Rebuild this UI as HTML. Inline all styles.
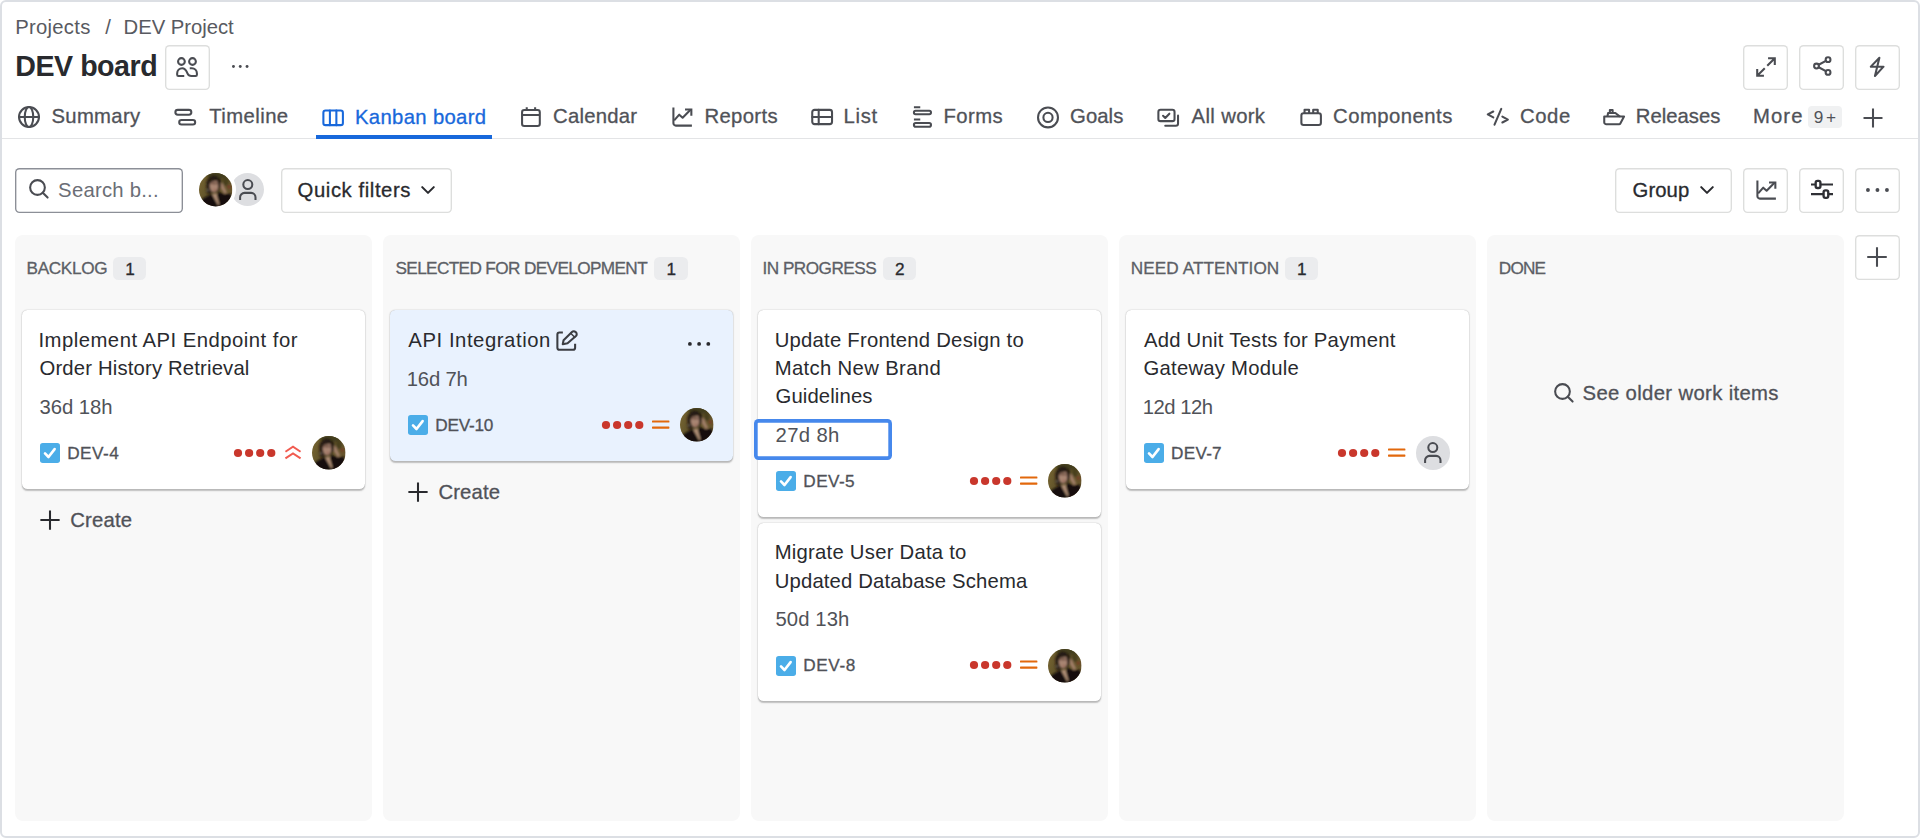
<!DOCTYPE html>
<html lang="en"><head><meta charset="utf-8"><title>DEV board</title>
<style>
html,body{margin:0;padding:0;background:#fff;}
body{width:1920px;height:838px;overflow:hidden;font-family:"Liberation Sans",Arial,sans-serif;}
#app{position:absolute;left:0;top:0;width:1920px;height:838px;background:#fff;overflow:hidden;}
#frame{position:absolute;left:0;top:0;width:1920px;height:838px;box-sizing:border-box;border:2px solid #dcdfe4;border-radius:6px;}
#app>*{position:absolute;}
.t{position:absolute;white-space:pre;margin:0;}
.ic{position:absolute;overflow:visible;}
.btn{position:absolute;border-radius:4.5px;background:#fff;box-shadow:inset 0 0 0 1.375px rgba(11,18,14,.14);}
.col{position:absolute;background:#f8f8f8;border-radius:8px;}
.card{position:absolute;background:#fff;border-radius:5.5px;box-shadow:0 1.375px 1.375px rgba(30,31,33,.25),0 0 1.375px rgba(30,31,33,.31);}
.badge{position:absolute;background:#ebecee;border-radius:4px;}
.dot{position:absolute;width:8.3px;height:8.3px;border-radius:50%;background:#c9372c;}
.av{position:absolute;border-radius:50%;overflow:hidden;}

</style></head>
<body>
<div id="app">
<span class="t" style="left:15.23px;top:16px;font-size:20.3px;line-height:22px;color:#585a61;letter-spacing:0.257px;">Projects</span>
<span class="t" style="left:105.20px;top:16px;font-size:20.3px;line-height:22px;color:#585a61;">/</span>
<span class="t" style="left:123.56px;top:16px;font-size:20.3px;line-height:22px;color:#585a61;letter-spacing:-0.029px;">DEV Project</span>
<span class="t" style="left:15.29px;top:50px;font-size:28.6px;line-height:32px;color:#292a2e;font-weight:700;letter-spacing:-0.473px;">DEV board</span>
<div class="btn" style="left:164.8px;top:44.7px;width:45px;height:45.3px;"></div>
<svg class="ic" style="left:176.10px;top:55.90px;" width="22" height="22" viewBox="0 0 16 16" fill="none" stroke="#4a4c52" stroke-width="1.5" stroke-linecap="round" stroke-linejoin="round"><circle cx="3.95" cy="4" r="2.45"/><circle cx="12" cy="4" r="2.45"/><path d="M6 14.5H1.75a.9.9 0 0 1-.9-.9V12.5A3.65 3.65 0 0 1 4.5 8.85c2.6 0 3.1 2.2 3.8 3.75.6 1.3 1.5 1.9 2.9 1.9h3.1a.9.9 0 0 0 .9-.9V12.5a3.65 3.65 0 0 0-3.65-3.65H10" stroke-linecap="butt"/></svg>
<svg class="ic" style="left:230.85px;top:63.95px" width="18.50" height="4.90" fill="#4a4c52"><circle cx="2.45" cy="2.45" r="1.45"/><circle cx="9.25" cy="2.45" r="1.45"/><circle cx="16.05" cy="2.45" r="1.45"/></svg>
<div class="btn" style="left:1743.3px;top:44.9px;width:44.4px;height:45.3px;"></div>
<div class="btn" style="left:1799.3px;top:44.9px;width:44.4px;height:45.3px;"></div>
<div class="btn" style="left:1855.3px;top:44.9px;width:44.4px;height:45.3px;"></div>
<svg class="ic" style="left:1755.00px;top:55.60px;" width="22" height="22" viewBox="0 0 16 16" fill="none" stroke="#4a4c52" stroke-width="1.5" stroke-linecap="round" stroke-linejoin="round"><path d="M9.5 1.6h4.9v4.9M14.4 1.6 8.9 7.1M6.5 14.4H1.6V9.5M1.6 14.4 7.1 8.9" stroke-linecap="butt" stroke-linejoin="miter"/></svg>
<svg class="ic" style="left:1810.90px;top:55.00px;" width="22" height="22" viewBox="0 0 16 16" fill="none" stroke="#4a4c52" stroke-width="1.5" stroke-linecap="round" stroke-linejoin="round"><circle cx="12.4" cy="3.4" r="1.75"/><circle cx="4" cy="8" r="1.75"/><circle cx="12.4" cy="12.65" r="1.75"/><path d="M5.6 7.1l5.2-2.85M5.6 8.9l5.2 2.85"/></svg>
<svg class="ic" style="left:1866.40px;top:55.90px;" width="22" height="22" viewBox="0 0 16 16" fill="none" stroke="#4a4c52" stroke-width="1.5" stroke-linecap="round" stroke-linejoin="round"><path d="M9.75 1.25 3.5 7.75h9.25L6.5 14.5z"/></svg>
<svg class="ic" style="left:17.90px;top:106.40px;" width="22" height="22" viewBox="0 0 16 16" fill="none" stroke="#4a4c52" stroke-width="1.5" stroke-linecap="round" stroke-linejoin="round"><circle cx="8" cy="8" r="7.25"/><ellipse cx="8" cy="8" rx="3.1" ry="7.25"/><path d="M.75 8h14.5"/></svg>
<span class="t" style="left:51.50px;top:105px;font-size:20.3px;line-height:22px;color:#505258;-webkit-text-stroke:0.3px #505258;letter-spacing:0.307px;">Summary</span>
<svg class="ic" style="left:174.30px;top:107.20px;" width="22" height="22" viewBox="0 0 16 16" fill="none" stroke="#4a4c52" stroke-width="1.5" stroke-linecap="round" stroke-linejoin="round"><rect x="1" y="2.1" width="11.6" height="3.5" rx="1.75"/><rect x="3.8" y="9.45" width="11.6" height="3.3" rx="1.65"/></svg>
<span class="t" style="left:209.14px;top:105px;font-size:20.3px;line-height:22px;color:#505258;-webkit-text-stroke:0.3px #505258;letter-spacing:0.449px;">Timeline</span>
<svg class="ic" style="left:321.90px;top:106.70px;" width="22" height="22" viewBox="0 0 16 16" fill="none" stroke="#1868db" stroke-width="1.5" stroke-linecap="round" stroke-linejoin="round"><rect x="1" y="2.5" width="14.2" height="10.7" rx="1.6"/><path d="M5.75 2.5v10.7M10.45 2.5v10.7"/></svg>
<span class="t" style="left:355.01px;top:106px;font-size:20.3px;line-height:22px;color:#1868db;-webkit-text-stroke:0.3px #1868db;letter-spacing:0.333px;">Kanban board</span>
<svg class="ic" style="left:520.20px;top:106.40px;" width="22" height="22" viewBox="0 0 16 16" fill="none" stroke="#4a4c52" stroke-width="1.5" stroke-linecap="round" stroke-linejoin="round"><rect x="1.5" y="2.9" width="12.9" height="11.6" rx="1.6"/><path d="M1.5 6.6h12.9M4.9 .9v2.6M11 .9v2.6" stroke-linecap="butt"/></svg>
<span class="t" style="left:553.04px;top:105px;font-size:20.3px;line-height:22px;color:#505258;-webkit-text-stroke:0.3px #505258;letter-spacing:0.246px;">Calendar</span>
<svg class="ic" style="left:671.40px;top:106.40px;" width="22" height="22" viewBox="0 0 16 16" fill="none" stroke="#4a4c52" stroke-width="1.5" stroke-linecap="round" stroke-linejoin="round"><path d="M1.75 1v11.5a1.75 1.75 0 0 0 1.75 1.75H15.2" stroke-linecap="butt"/><path d="M2.3 10.5 6 6.3l2.45 2.2 5.9-5.9" stroke-linecap="butt"/><path d="M10.2 2.5h4.6v4.5" stroke-linecap="butt" stroke-linejoin="miter"/></svg>
<span class="t" style="left:704.47px;top:105px;font-size:20.3px;line-height:22px;color:#505258;-webkit-text-stroke:0.3px #505258;letter-spacing:0.344px;">Reports</span>
<svg class="ic" style="left:810.60px;top:106.40px;" width="22" height="22" viewBox="0 0 16 16" fill="none" stroke="#4a4c52" stroke-width="1.5" stroke-linecap="round" stroke-linejoin="round"><rect x=".9" y="2.8" width="14.4" height="10.4" rx="1.7"/><path d="M.9 8h14.4M5.6 2.8v10.4"/></svg>
<span class="t" style="left:843.58px;top:105px;font-size:20.3px;line-height:22px;color:#505258;-webkit-text-stroke:0.3px #505258;letter-spacing:0.649px;">List</span>
<svg class="ic" style="left:912.00px;top:106.40px;" width="22" height="22" viewBox="0 0 16 16" fill="none" stroke="#4a4c52" stroke-width="1.5" stroke-linecap="round" stroke-linejoin="round"><path d="M1.4 .85h4.6M1.4 9.8h4.6" stroke-linecap="butt"/><rect x="1.4" y="3.45" width="12.4" height="2.55" rx="1.2"/><rect x="1.4" y="12.3" width="12.4" height="2.85" rx="1.3"/></svg>
<span class="t" style="left:943.58px;top:105px;font-size:20.3px;line-height:22px;color:#505258;-webkit-text-stroke:0.3px #505258;letter-spacing:0.394px;">Forms</span>
<svg class="ic" style="left:1036.50px;top:106.40px;" width="22" height="22" viewBox="0 0 16 16" fill="none" stroke="#4a4c52" stroke-width="1.5" stroke-linecap="round" stroke-linejoin="round"><circle cx="8" cy="8.3" r="7.25"/><circle cx="8" cy="8.3" r="3.35"/></svg>
<span class="t" style="left:1070.05px;top:105px;font-size:20.3px;line-height:22px;color:#505258;-webkit-text-stroke:0.3px #505258;letter-spacing:0.067px;">Goals</span>
<svg class="ic" style="left:1157.00px;top:106.40px;" width="22" height="22" viewBox="0 0 16 16" fill="none" stroke="#4a4c52" stroke-width="1.5" stroke-linecap="round" stroke-linejoin="round"><rect x="1" y="2.75" width="11.75" height="8.25" rx="1.6"/><path d="M4.4 7.1 6 8.7 9 5.6"/><path d="M15.3 7v5.75a1.6 1.6 0 0 1-1.6 1.6H6"/></svg>
<span class="t" style="left:1191.55px;top:105px;font-size:20.3px;line-height:22px;color:#505258;-webkit-text-stroke:0.3px #505258;letter-spacing:0.353px;">All work</span>
<svg class="ic" style="left:1299.80px;top:106.40px;" width="22" height="22" viewBox="0 0 16 16" fill="none" stroke="#4a4c52" stroke-width="1.5" stroke-linecap="round" stroke-linejoin="round"><rect x="1" y="5.25" width="14.2" height="8.5" rx="1.6"/><path d="M3.3 5.25v-2.5h3.3v2.5M9.6 5.25v-2.5h3.3v2.5" stroke-linecap="butt"/></svg>
<span class="t" style="left:1333.04px;top:105px;font-size:20.3px;line-height:22px;color:#505258;-webkit-text-stroke:0.3px #505258;letter-spacing:0.473px;">Components</span>
<svg class="ic" style="left:1486.00px;top:106.40px;" width="22" height="22" viewBox="0 0 16 16" fill="none" stroke="#4a4c52" stroke-width="1.5" stroke-linecap="round" stroke-linejoin="round"><path d="M5.3 4 1.3 6.15 5.3 8.3M11.9 7.7l4 2.15-4 2.15M11.1 2.1 6.2 13.6"/></svg>
<span class="t" style="left:1519.88px;top:105px;font-size:20.3px;line-height:22px;color:#505258;-webkit-text-stroke:0.3px #505258;letter-spacing:0.630px;">Code</span>
<svg class="ic" style="left:1603.25px;top:106.40px;" width="22" height="22" viewBox="0 0 16 16" fill="none" stroke="#4a4c52" stroke-width="1.5" stroke-linecap="round" stroke-linejoin="round"><path d="M.9 7.7h14.4l-2.7 5a1 1 0 0 1-.9.55H2.4a1.5 1.5 0 0 1-1.5-1.5z"/><path d="M3.2 7.7l.5-2.6H9l3.3 2.6M5 5.1V2.9h2V5.1" stroke-linecap="butt"/></svg>
<span class="t" style="left:1635.86px;top:105px;font-size:20.3px;line-height:22px;color:#505258;-webkit-text-stroke:0.3px #505258;letter-spacing:-0.018px;">Releases</span>
<span class="t" style="left:1752.93px;top:105px;font-size:20.3px;line-height:22px;color:#505258;-webkit-text-stroke:0.3px #505258;letter-spacing:1.133px;">More</span>
<div class="badge" style="left:1808.1px;top:105.9px;width:33.7px;height:22.1px;background:#f0f1f2"></div>
<span class="t" style="left:1813.82px;top:107px;font-size:17.2px;line-height:20px;color:#505258;letter-spacing:2.596px;">9+</span>
<svg class="ic" style="left:1861.70px;top:106.50px;" width="22" height="22" viewBox="0 0 16 16" fill="none" stroke="#4a4c52" stroke-width="1.5" stroke-linecap="round" stroke-linejoin="round"><path d="M8 1.1v13.8M1.1 8h13.8" stroke-linecap="butt"/></svg>
<div style="left:2px;top:138px;width:1916px;height:1.4px;background:#e3e4e6"></div>
<div style="left:315.9px;top:135.1px;width:176.2px;height:4.1px;background:#1868db"></div>
<div class="btn" style="left:15.3px;top:168px;width:167.5px;height:44.5px;box-shadow:inset 0 0 0 1.375px #8c8f97"></div>
<svg class="ic" style="left:27.90px;top:177.50px;" width="22" height="22" viewBox="0 0 16 16" fill="none" stroke="#4a4c52" stroke-width="1.5" stroke-linecap="round" stroke-linejoin="round"><circle cx="6.9" cy="6.9" r="5.35"/><path d="M10.75 10.75l3.5 3.5"/></svg>
<span class="t" style="left:58.11px;top:179px;font-size:20.3px;line-height:22px;color:#6b6e76;letter-spacing:0.242px;">Search b...</span>
<div class="av" style="left:230.80px;top:172.60px;width:33.6px;height:33.6px;background:#dddee1"></div>
<svg class="ic" style="left:230.80px;top:172.60px" width="33.6" height="33.6" viewBox="0 0 33.6 33.6" fill="none" stroke="#4a4c52" stroke-width="2.05"><circle cx="16.8" cy="11.6" r="4.5"/><path d="M9.1 26.9v-2.6a4.4 4.4 0 0 1 4.4-4.4h6.6a4.4 4.4 0 0 1 4.4 4.4v2.6"/></svg>
<div class="av" style="left:196.6px;top:169.9px;width:39px;height:39px;background:#fff"></div>
<svg class="ic" style="left:199.40px;top:172.70px" width="33.4" height="33.4" viewBox="0 0 100 100"><defs><clipPath id="c1994"><circle cx="50" cy="50" r="50"/></clipPath><filter id="b1994" x="-10%" y="-10%" width="120%" height="120%"><feGaussianBlur stdDeviation="2.7"/></filter><linearGradient id="g1994" x1="0" y1="0" x2="1" y2="0.3"><stop offset="0" stop-color="#7b6832"/><stop offset="0.45" stop-color="#5b4f29"/><stop offset="1" stop-color="#67552c"/></linearGradient></defs><g clip-path="url(#c1994)"><rect width="100" height="100" fill="url(#g1994)"/><g filter="url(#b1994)"><ellipse cx="55" cy="7" rx="32" ry="10" fill="#423c1d"/><ellipse cx="80" cy="24" rx="9" ry="15" fill="#4a401f"/><ellipse cx="90" cy="42" rx="5" ry="5" fill="#7a3a25"/><ellipse cx="44" cy="33" rx="22" ry="26" fill="#261b12"/><path d="M23 40 Q20 62 30 64 L40 56Z" fill="#2a1e13"/><ellipse cx="45" cy="38" rx="13" ry="19" fill="#a98572"/><path d="M30 24 Q45 9 61 25 Q53 20 46 25 Q38 22 31 33Z" fill="#261b12"/><ellipse cx="45" cy="31" rx="11" ry="2.8" fill="#5a4034" opacity=".85"/><ellipse cx="47" cy="50" rx="3.5" ry="1.5" fill="#8a4238"/><ellipse cx="61" cy="30" rx="4.5" ry="15" fill="#261b12"/><path d="M65 31 Q70 27 73 36 L84 58 L77 63 L65 46Z" fill="#a07e68"/><path d="M-5 105 L10 78 L38 62 L50 72 L58 56 L76 63 L95 62 L108 105Z" fill="#14110b"/><path d="M39 64 L52 61 L61 94 L57 96Z" fill="#b08f76"/><circle cx="27" cy="51" r="2" fill="#c8c4bc"/></g></g></svg>
<div class="btn" style="left:280.6px;top:168px;width:171.3px;height:44.5px;"></div>
<span class="t" style="left:297.61px;top:179px;font-size:20.3px;line-height:22px;color:#292a2e;-webkit-text-stroke:0.3px #292a2e;letter-spacing:0.575px;">Quick filters</span>
<svg class="ic" style="left:416.50px;top:179.20px;" width="22" height="22" viewBox="0 0 16 16" fill="none" stroke="#292a2e" stroke-width="1.5" stroke-linecap="round" stroke-linejoin="round"><path d="M3.8 5.9 8 10.1l4.2-4.2"/></svg>
<div class="btn" style="left:1615.2px;top:168px;width:116.8px;height:44.5px;"></div>
<span class="t" style="left:1632.58px;top:179px;font-size:20.3px;line-height:22px;color:#292a2e;-webkit-text-stroke:0.3px #292a2e;letter-spacing:0.079px;">Group</span>
<svg class="ic" style="left:1696.00px;top:179.20px;" width="22" height="22" viewBox="0 0 16 16" fill="none" stroke="#292a2e" stroke-width="1.5" stroke-linecap="round" stroke-linejoin="round"><path d="M3.8 5.9 8 10.1l4.2-4.2"/></svg>
<div class="btn" style="left:1743.2px;top:168px;width:44.4px;height:44.6px;"></div>
<div class="btn" style="left:1799.3px;top:168px;width:44.4px;height:44.6px;"></div>
<div class="btn" style="left:1855.3px;top:168px;width:44.4px;height:44.6px;"></div>
<svg class="ic" style="left:1754.50px;top:179.30px;" width="22" height="22" viewBox="0 0 16 16" fill="none" stroke="#4a4c52" stroke-width="1.5" stroke-linecap="round" stroke-linejoin="round"><path d="M1.75 1v11.5a1.75 1.75 0 0 0 1.75 1.75H15.2" stroke-linecap="butt"/><path d="M2.3 10.5 6 6.3l2.45 2.2 5.9-5.9" stroke-linecap="butt"/><path d="M10.2 2.5h4.6v4.5" stroke-linecap="butt" stroke-linejoin="miter"/></svg>
<svg class="ic" style="left:1810.90px;top:179.30px;" width="22" height="22" viewBox="0 0 16 16" fill="none" stroke="#2f3035" stroke-width="1.5" stroke-linecap="round" stroke-linejoin="round"><path d="M0 3.95h3.5M6.75 3.95H16M0 11h9.25M12.45 11H16" stroke-linecap="butt"/><rect x="3.4" y="1.4" width="3.45" height="5.15" rx="1.3" stroke-width="1.7"/><rect x="9.15" y="8.3" width="3.4" height="5.45" rx="1.3" stroke-width="1.7"/></svg>
<svg class="ic" style="left:1864.85px;top:186.95px" width="24.90" height="5.90" fill="#4a4c52"><circle cx="2.95" cy="2.95" r="1.95"/><circle cx="12.45" cy="2.95" r="1.95"/><circle cx="21.95" cy="2.95" r="1.95"/></svg>
<div class="btn" style="left:1855.3px;top:235.2px;width:44.4px;height:44.4px;"></div>
<svg class="ic" style="left:1866.30px;top:246.40px;" width="22" height="22" viewBox="0 0 16 16" fill="none" stroke="#4a4c52" stroke-width="1.5" stroke-linecap="round" stroke-linejoin="round"><path d="M8 .9v14.2M.9 8h14.2" stroke-linecap="butt"/></svg>
<div class="col" style="left:15.2px;top:235px;width:356.6px;height:585.5px"></div>
<span class="t" style="left:26.54px;top:258px;font-size:17.2px;line-height:20px;color:#5c5f66;-webkit-text-stroke:0.3px #5c5f66;letter-spacing:-0.339px;">BACKLOG</span>
<div class="badge" style="left:113.0px;top:256.5px;width:33.3px;height:23.5px;border-radius:5.5px"></div>
<span class="t" style="left:125.18px;top:259px;font-size:17.2px;line-height:20px;color:#292a2e;-webkit-text-stroke:0.3px #292a2e;">1</span>
<div class="col" style="left:383.2px;top:235px;width:356.6px;height:585.5px"></div>
<span class="t" style="left:395.45px;top:258px;font-size:17.2px;line-height:20px;color:#5c5f66;-webkit-text-stroke:0.3px #5c5f66;letter-spacing:-0.620px;">SELECTED FOR DEVELOPMENT</span>
<div class="badge" style="left:654.3px;top:256.5px;width:33.3px;height:23.5px;border-radius:5.5px"></div>
<span class="t" style="left:666.55px;top:259px;font-size:17.2px;line-height:20px;color:#292a2e;-webkit-text-stroke:0.3px #292a2e;">1</span>
<div class="col" style="left:751.3px;top:235px;width:356.6px;height:585.5px"></div>
<span class="t" style="left:762.58px;top:258px;font-size:17.2px;line-height:20px;color:#5c5f66;-webkit-text-stroke:0.3px #5c5f66;letter-spacing:-0.533px;">IN PROGRESS</span>
<div class="badge" style="left:882.5px;top:256.5px;width:33.3px;height:23.5px;border-radius:5.5px"></div>
<span class="t" style="left:894.98px;top:259px;font-size:17.2px;line-height:20px;color:#292a2e;-webkit-text-stroke:0.3px #292a2e;">2</span>
<div class="col" style="left:1119.4px;top:235px;width:356.6px;height:585.5px"></div>
<span class="t" style="left:1130.77px;top:258px;font-size:17.2px;line-height:20px;color:#5c5f66;-webkit-text-stroke:0.3px #5c5f66;letter-spacing:0.060px;">NEED ATTENTION</span>
<div class="badge" style="left:1284.8px;top:256.5px;width:33.3px;height:23.5px;border-radius:5.5px"></div>
<span class="t" style="left:1297.04px;top:259px;font-size:17.2px;line-height:20px;color:#292a2e;-webkit-text-stroke:0.3px #292a2e;">1</span>
<div class="col" style="left:1487.4px;top:235px;width:356.6px;height:585.5px"></div>
<span class="t" style="left:1498.87px;top:258px;font-size:17.2px;line-height:20px;color:#5c5f66;-webkit-text-stroke:0.3px #5c5f66;letter-spacing:-0.813px;">DONE</span>
<div class="card" style="left:22.2px;top:309.7px;width:343.1px;height:179px;background:#fff"></div>
<span class="t" style="left:38.50px;top:329px;font-size:20.3px;line-height:22px;color:#292a2e;letter-spacing:0.480px;">Implement API Endpoint for</span>
<span class="t" style="left:39.45px;top:357px;font-size:20.3px;line-height:22px;color:#292a2e;letter-spacing:0.168px;">Order History Retrieval</span>
<span class="t" style="left:39.44px;top:396px;font-size:20.3px;line-height:22px;color:#505258;letter-spacing:-0.024px;">36d 18h</span>
<svg class="ic" style="left:39.60px;top:443.00px" width="20" height="20" viewBox="0 0 16 16"><rect x="0" y="0" width="16" height="16" rx="2.2" fill="#4bade8"/><path d="M4 8.3 6.8 11.2 11.7 4.9" fill="none" stroke="#fff" stroke-width="2.1" stroke-linecap="round" stroke-linejoin="round"/></svg>
<span class="t" style="left:67.16px;top:443px;font-size:17.2px;line-height:20px;color:#505258;-webkit-text-stroke:0.3px #505258;letter-spacing:0.499px;">DEV-4</span>
<svg class="ic" style="left:231.80px;top:446.60px" width="46" height="12" fill="#c9372c"><circle cx="6.00" cy="6" r="4.1"/><circle cx="17.10" cy="6" r="4.1"/><circle cx="28.20" cy="6" r="4.1"/><circle cx="39.30" cy="6" r="4.1"/></svg>
<svg class="ic" style="left:281.70px;top:441.60px;" width="22" height="22" viewBox="0 0 16 16" fill="none" stroke="#f15b50" stroke-width="1.4" stroke-linecap="round" stroke-linejoin="round"><path d="M2.5 7.1 8 3.45l5.5 3.65M2.5 11.9 8 8.25l5.5 3.65" stroke-linecap="butt" stroke-linejoin="miter"/></svg>
<svg class="ic" style="left:312.00px;top:436.30px" width="33.6" height="33.6" viewBox="0 0 100 100"><defs><clipPath id="c3120"><circle cx="50" cy="50" r="50"/></clipPath><filter id="b3120" x="-10%" y="-10%" width="120%" height="120%"><feGaussianBlur stdDeviation="2.7"/></filter><linearGradient id="g3120" x1="0" y1="0" x2="1" y2="0.3"><stop offset="0" stop-color="#7b6832"/><stop offset="0.45" stop-color="#5b4f29"/><stop offset="1" stop-color="#67552c"/></linearGradient></defs><g clip-path="url(#c3120)"><rect width="100" height="100" fill="url(#g3120)"/><g filter="url(#b3120)"><ellipse cx="55" cy="7" rx="32" ry="10" fill="#423c1d"/><ellipse cx="80" cy="24" rx="9" ry="15" fill="#4a401f"/><ellipse cx="90" cy="42" rx="5" ry="5" fill="#7a3a25"/><ellipse cx="44" cy="33" rx="22" ry="26" fill="#261b12"/><path d="M23 40 Q20 62 30 64 L40 56Z" fill="#2a1e13"/><ellipse cx="45" cy="38" rx="13" ry="19" fill="#a98572"/><path d="M30 24 Q45 9 61 25 Q53 20 46 25 Q38 22 31 33Z" fill="#261b12"/><ellipse cx="45" cy="31" rx="11" ry="2.8" fill="#5a4034" opacity=".85"/><ellipse cx="47" cy="50" rx="3.5" ry="1.5" fill="#8a4238"/><ellipse cx="61" cy="30" rx="4.5" ry="15" fill="#261b12"/><path d="M65 31 Q70 27 73 36 L84 58 L77 63 L65 46Z" fill="#a07e68"/><path d="M-5 105 L10 78 L38 62 L50 72 L58 56 L76 63 L95 62 L108 105Z" fill="#14110b"/><path d="M39 64 L52 61 L61 94 L57 96Z" fill="#b08f76"/><circle cx="27" cy="51" r="2" fill="#c8c4bc"/></g></g></svg>
<div class="card" style="left:390.2px;top:309.7px;width:343.1px;height:151.1px;background:#e9f2fe"></div>
<span class="t" style="left:408.35px;top:329px;font-size:20.3px;line-height:22px;color:#292a2e;letter-spacing:0.557px;">API Integration</span>
<span class="t" style="left:406.68px;top:368px;font-size:20.3px;line-height:22px;color:#505258;letter-spacing:-0.177px;">16d 7h</span>
<svg class="ic" style="left:407.65px;top:415.10px" width="20" height="20" viewBox="0 0 16 16"><rect x="0" y="0" width="16" height="16" rx="2.2" fill="#4bade8"/><path d="M4 8.3 6.8 11.2 11.7 4.9" fill="none" stroke="#fff" stroke-width="2.1" stroke-linecap="round" stroke-linejoin="round"/></svg>
<span class="t" style="left:435.26px;top:415px;font-size:17.2px;line-height:20px;color:#505258;-webkit-text-stroke:0.3px #505258;letter-spacing:-0.241px;">DEV-10</span>
<svg class="ic" style="left:599.85px;top:418.70px" width="46" height="12" fill="#c9372c"><circle cx="6.00" cy="6" r="4.1"/><circle cx="17.10" cy="6" r="4.1"/><circle cx="28.20" cy="6" r="4.1"/><circle cx="39.30" cy="6" r="4.1"/></svg>
<svg class="ic" style="left:651.85px;top:417.80px" width="17.4" height="12" fill="#e2680c"><rect x="0" y="2.4" width="17.4" height="2.15" rx=".6"/><rect x="0" y="8.55" width="17.4" height="2.15" rx=".6"/></svg>
<svg class="ic" style="left:680.05px;top:408.40px" width="33.6" height="33.6" viewBox="0 0 100 100"><defs><clipPath id="c6800"><circle cx="50" cy="50" r="50"/></clipPath><filter id="b6800" x="-10%" y="-10%" width="120%" height="120%"><feGaussianBlur stdDeviation="2.7"/></filter><linearGradient id="g6800" x1="0" y1="0" x2="1" y2="0.3"><stop offset="0" stop-color="#7b6832"/><stop offset="0.45" stop-color="#5b4f29"/><stop offset="1" stop-color="#67552c"/></linearGradient></defs><g clip-path="url(#c6800)"><rect width="100" height="100" fill="url(#g6800)"/><g filter="url(#b6800)"><ellipse cx="55" cy="7" rx="32" ry="10" fill="#423c1d"/><ellipse cx="80" cy="24" rx="9" ry="15" fill="#4a401f"/><ellipse cx="90" cy="42" rx="5" ry="5" fill="#7a3a25"/><ellipse cx="44" cy="33" rx="22" ry="26" fill="#261b12"/><path d="M23 40 Q20 62 30 64 L40 56Z" fill="#2a1e13"/><ellipse cx="45" cy="38" rx="13" ry="19" fill="#a98572"/><path d="M30 24 Q45 9 61 25 Q53 20 46 25 Q38 22 31 33Z" fill="#261b12"/><ellipse cx="45" cy="31" rx="11" ry="2.8" fill="#5a4034" opacity=".85"/><ellipse cx="47" cy="50" rx="3.5" ry="1.5" fill="#8a4238"/><ellipse cx="61" cy="30" rx="4.5" ry="15" fill="#261b12"/><path d="M65 31 Q70 27 73 36 L84 58 L77 63 L65 46Z" fill="#a07e68"/><path d="M-5 105 L10 78 L38 62 L50 72 L58 56 L76 63 L95 62 L108 105Z" fill="#14110b"/><path d="M39 64 L52 61 L61 94 L57 96Z" fill="#b08f76"/><circle cx="27" cy="51" r="2" fill="#c8c4bc"/></g></g></svg>
<div class="card" style="left:758.3px;top:309.7px;width:343.1px;height:207.0px;background:#fff"></div>
<span class="t" style="left:774.72px;top:329px;font-size:20.3px;line-height:22px;color:#292a2e;letter-spacing:0.230px;">Update Frontend Design to</span>
<span class="t" style="left:774.69px;top:357px;font-size:20.3px;line-height:22px;color:#292a2e;letter-spacing:0.344px;">Match New Brand</span>
<span class="t" style="left:775.51px;top:385px;font-size:20.3px;line-height:22px;color:#292a2e;letter-spacing:0.124px;">Guidelines</span>
<div style="left:754.40px;top:419.10px;width:137.9px;height:41.2px;border-radius:4.5px;background:#fff;box-shadow:inset 0 0 0 3.7px #4688ec"></div>
<span class="t" style="left:775.54px;top:424px;font-size:20.3px;line-height:22px;color:#505258;letter-spacing:0.345px;">27d 8h</span>
<svg class="ic" style="left:775.70px;top:471.00px" width="20" height="20" viewBox="0 0 16 16"><rect x="0" y="0" width="16" height="16" rx="2.2" fill="#4bade8"/><path d="M4 8.3 6.8 11.2 11.7 4.9" fill="none" stroke="#fff" stroke-width="2.1" stroke-linecap="round" stroke-linejoin="round"/></svg>
<span class="t" style="left:803.36px;top:471px;font-size:17.2px;line-height:20px;color:#505258;-webkit-text-stroke:0.3px #505258;letter-spacing:0.393px;">DEV-5</span>
<svg class="ic" style="left:967.90px;top:474.60px" width="46" height="12" fill="#c9372c"><circle cx="6.00" cy="6" r="4.1"/><circle cx="17.10" cy="6" r="4.1"/><circle cx="28.20" cy="6" r="4.1"/><circle cx="39.30" cy="6" r="4.1"/></svg>
<svg class="ic" style="left:1019.90px;top:473.70px" width="17.4" height="12" fill="#e2680c"><rect x="0" y="2.4" width="17.4" height="2.15" rx=".6"/><rect x="0" y="8.55" width="17.4" height="2.15" rx=".6"/></svg>
<svg class="ic" style="left:1048.10px;top:464.30px" width="33.6" height="33.6" viewBox="0 0 100 100"><defs><clipPath id="c10481"><circle cx="50" cy="50" r="50"/></clipPath><filter id="b10481" x="-10%" y="-10%" width="120%" height="120%"><feGaussianBlur stdDeviation="2.7"/></filter><linearGradient id="g10481" x1="0" y1="0" x2="1" y2="0.3"><stop offset="0" stop-color="#7b6832"/><stop offset="0.45" stop-color="#5b4f29"/><stop offset="1" stop-color="#67552c"/></linearGradient></defs><g clip-path="url(#c10481)"><rect width="100" height="100" fill="url(#g10481)"/><g filter="url(#b10481)"><ellipse cx="55" cy="7" rx="32" ry="10" fill="#423c1d"/><ellipse cx="80" cy="24" rx="9" ry="15" fill="#4a401f"/><ellipse cx="90" cy="42" rx="5" ry="5" fill="#7a3a25"/><ellipse cx="44" cy="33" rx="22" ry="26" fill="#261b12"/><path d="M23 40 Q20 62 30 64 L40 56Z" fill="#2a1e13"/><ellipse cx="45" cy="38" rx="13" ry="19" fill="#a98572"/><path d="M30 24 Q45 9 61 25 Q53 20 46 25 Q38 22 31 33Z" fill="#261b12"/><ellipse cx="45" cy="31" rx="11" ry="2.8" fill="#5a4034" opacity=".85"/><ellipse cx="47" cy="50" rx="3.5" ry="1.5" fill="#8a4238"/><ellipse cx="61" cy="30" rx="4.5" ry="15" fill="#261b12"/><path d="M65 31 Q70 27 73 36 L84 58 L77 63 L65 46Z" fill="#a07e68"/><path d="M-5 105 L10 78 L38 62 L50 72 L58 56 L76 63 L95 62 L108 105Z" fill="#14110b"/><path d="M39 64 L52 61 L61 94 L57 96Z" fill="#b08f76"/><circle cx="27" cy="51" r="2" fill="#c8c4bc"/></g></g></svg>
<div class="card" style="left:758.3px;top:522.9px;width:343.1px;height:178.3px;background:#fff"></div>
<span class="t" style="left:774.69px;top:541px;font-size:20.3px;line-height:22px;color:#292a2e;letter-spacing:0.239px;">Migrate User Data to</span>
<span class="t" style="left:774.72px;top:570px;font-size:20.3px;line-height:22px;color:#292a2e;letter-spacing:0.152px;">Updated Database Schema</span>
<span class="t" style="left:775.53px;top:608px;font-size:20.3px;line-height:22px;color:#505258;letter-spacing:0.078px;">50d 13h</span>
<svg class="ic" style="left:775.70px;top:655.50px" width="20" height="20" viewBox="0 0 16 16"><rect x="0" y="0" width="16" height="16" rx="2.2" fill="#4bade8"/><path d="M4 8.3 6.8 11.2 11.7 4.9" fill="none" stroke="#fff" stroke-width="2.1" stroke-linecap="round" stroke-linejoin="round"/></svg>
<span class="t" style="left:803.36px;top:655px;font-size:17.2px;line-height:20px;color:#505258;-webkit-text-stroke:0.3px #505258;letter-spacing:0.554px;">DEV-8</span>
<svg class="ic" style="left:967.90px;top:659.10px" width="46" height="12" fill="#c9372c"><circle cx="6.00" cy="6" r="4.1"/><circle cx="17.10" cy="6" r="4.1"/><circle cx="28.20" cy="6" r="4.1"/><circle cx="39.30" cy="6" r="4.1"/></svg>
<svg class="ic" style="left:1019.90px;top:658.20px" width="17.4" height="12" fill="#e2680c"><rect x="0" y="2.4" width="17.4" height="2.15" rx=".6"/><rect x="0" y="8.55" width="17.4" height="2.15" rx=".6"/></svg>
<svg class="ic" style="left:1048.10px;top:648.80px" width="33.6" height="33.6" viewBox="0 0 100 100"><defs><clipPath id="c10481"><circle cx="50" cy="50" r="50"/></clipPath><filter id="b10481" x="-10%" y="-10%" width="120%" height="120%"><feGaussianBlur stdDeviation="2.7"/></filter><linearGradient id="g10481" x1="0" y1="0" x2="1" y2="0.3"><stop offset="0" stop-color="#7b6832"/><stop offset="0.45" stop-color="#5b4f29"/><stop offset="1" stop-color="#67552c"/></linearGradient></defs><g clip-path="url(#c10481)"><rect width="100" height="100" fill="url(#g10481)"/><g filter="url(#b10481)"><ellipse cx="55" cy="7" rx="32" ry="10" fill="#423c1d"/><ellipse cx="80" cy="24" rx="9" ry="15" fill="#4a401f"/><ellipse cx="90" cy="42" rx="5" ry="5" fill="#7a3a25"/><ellipse cx="44" cy="33" rx="22" ry="26" fill="#261b12"/><path d="M23 40 Q20 62 30 64 L40 56Z" fill="#2a1e13"/><ellipse cx="45" cy="38" rx="13" ry="19" fill="#a98572"/><path d="M30 24 Q45 9 61 25 Q53 20 46 25 Q38 22 31 33Z" fill="#261b12"/><ellipse cx="45" cy="31" rx="11" ry="2.8" fill="#5a4034" opacity=".85"/><ellipse cx="47" cy="50" rx="3.5" ry="1.5" fill="#8a4238"/><ellipse cx="61" cy="30" rx="4.5" ry="15" fill="#261b12"/><path d="M65 31 Q70 27 73 36 L84 58 L77 63 L65 46Z" fill="#a07e68"/><path d="M-5 105 L10 78 L38 62 L50 72 L58 56 L76 63 L95 62 L108 105Z" fill="#14110b"/><path d="M39 64 L52 61 L61 94 L57 96Z" fill="#b08f76"/><circle cx="27" cy="51" r="2" fill="#c8c4bc"/></g></g></svg>
<div class="card" style="left:1126.4px;top:309.7px;width:343.1px;height:179px;background:#fff"></div>
<span class="t" style="left:1143.89px;top:329px;font-size:20.3px;line-height:22px;color:#292a2e;letter-spacing:0.244px;">Add Unit Tests for Payment</span>
<span class="t" style="left:1143.61px;top:357px;font-size:20.3px;line-height:22px;color:#292a2e;letter-spacing:0.228px;">Gateway Module</span>
<span class="t" style="left:1142.84px;top:396px;font-size:20.3px;line-height:22px;color:#505258;letter-spacing:-0.523px;">12d 12h</span>
<svg class="ic" style="left:1143.75px;top:443.00px" width="20" height="20" viewBox="0 0 16 16"><rect x="0" y="0" width="16" height="16" rx="2.2" fill="#4bade8"/><path d="M4 8.3 6.8 11.2 11.7 4.9" fill="none" stroke="#fff" stroke-width="2.1" stroke-linecap="round" stroke-linejoin="round"/></svg>
<span class="t" style="left:1171.12px;top:443px;font-size:17.2px;line-height:20px;color:#505258;-webkit-text-stroke:0.3px #505258;letter-spacing:0.225px;">DEV-7</span>
<svg class="ic" style="left:1335.95px;top:446.60px" width="46" height="12" fill="#c9372c"><circle cx="6.00" cy="6" r="4.1"/><circle cx="17.10" cy="6" r="4.1"/><circle cx="28.20" cy="6" r="4.1"/><circle cx="39.30" cy="6" r="4.1"/></svg>
<svg class="ic" style="left:1387.95px;top:445.70px" width="17.4" height="12" fill="#e2680c"><rect x="0" y="2.4" width="17.4" height="2.15" rx=".6"/><rect x="0" y="8.55" width="17.4" height="2.15" rx=".6"/></svg>
<div class="av" style="left:1416.15px;top:436.30px;width:33.6px;height:33.6px;background:#dddee1"></div>
<svg class="ic" style="left:1416.15px;top:436.30px" width="33.6" height="33.6" viewBox="0 0 33.6 33.6" fill="none" stroke="#4a4c52" stroke-width="2.05"><circle cx="16.8" cy="11.6" r="4.5"/><path d="M9.1 26.9v-2.6a4.4 4.4 0 0 1 4.4-4.4h6.6a4.4 4.4 0 0 1 4.4 4.4v2.6"/></svg>
<svg class="ic" style="left:556.00px;top:329.90px;" width="22" height="22" viewBox="0 0 16 16" fill="none" stroke="#3b3d42" stroke-width="1.5" stroke-linecap="round" stroke-linejoin="round"><path d="M5 1.8H2.5A1.5 1.5 0 0 0 1 3.3v9.6a1.5 1.5 0 0 0 1.5 1.5h9.9a1.5 1.5 0 0 0 1.5-1.5V10" stroke-linecap="butt"/><path d="M4.9 10.4l.6-2.9 6.1-6.1a1.8 1.8 0 0 1 2.6 0l.3.3a1.8 1.8 0 0 1 0 2.6L8.4 9.6z"/><path d="M10.7 2.4l2.9 2.9" stroke-width="1.1"/></svg>
<svg class="ic" style="left:687.30px;top:340.90px" width="24.20" height="5.80" fill="#292a2e"><circle cx="2.90" cy="2.90" r="1.9"/><circle cx="12.10" cy="2.90" r="1.9"/><circle cx="21.30" cy="2.90" r="1.9"/></svg>
<svg class="ic" style="left:38.50px;top:508.80px;" width="22" height="22" viewBox="0 0 16 16" fill="none" stroke="#292a2e" stroke-width="1.5" stroke-linecap="round" stroke-linejoin="round"><path d="M8 1v14M1 8h14" stroke-linecap="butt"/></svg>
<span class="t" style="left:70.28px;top:509px;font-size:20.3px;line-height:22px;color:#505258;-webkit-text-stroke:0.3px #505258;letter-spacing:0.173px;">Create</span>
<svg class="ic" style="left:406.55px;top:480.90px;" width="22" height="22" viewBox="0 0 16 16" fill="none" stroke="#292a2e" stroke-width="1.5" stroke-linecap="round" stroke-linejoin="round"><path d="M8 1v14M1 8h14" stroke-linecap="butt"/></svg>
<span class="t" style="left:438.38px;top:481px;font-size:20.3px;line-height:22px;color:#505258;-webkit-text-stroke:0.3px #505258;letter-spacing:0.173px;">Create</span>
<svg class="ic" style="left:1552.50px;top:382.10px;" width="22" height="22" viewBox="0 0 16 16" fill="none" stroke="#4a4c52" stroke-width="1.5" stroke-linecap="round" stroke-linejoin="round"><circle cx="6.9" cy="6.9" r="5.35"/><path d="M10.75 10.75l3.5 3.5"/></svg>
<span class="t" style="left:1582.50px;top:382px;font-size:20.3px;line-height:22px;color:#505258;-webkit-text-stroke:0.3px #505258;letter-spacing:0.349px;">See older work items</span>
<div id="frame"></div>
</div>
</body></html>
